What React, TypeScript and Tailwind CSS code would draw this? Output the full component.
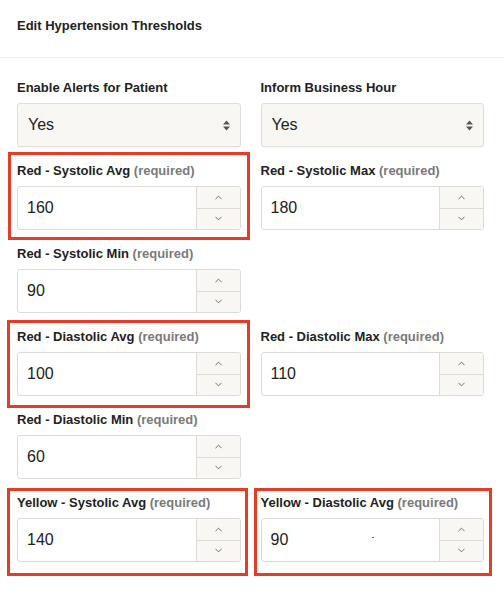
import { ChevronDown, ChevronUp } from "lucide-react";

type Field = {
  label: string;
  value: string;
  required?: boolean;
  // annotation box drawn around the field
  mark?: string;
  speck?: boolean;
};

const rows: [Field, Field | null][] = [
  [
    { label: "Red - Systolic Avg", value: "160", required: true, mark: "-top-[11px] -left-[9px] -right-[9px] -bottom-[10px]" },
    { label: "Red - Systolic Max", value: "180", required: true },
  ],
  [{ label: "Red - Systolic Min", value: "90", required: true }, null],
  [
    { label: "Red - Diastolic Avg", value: "100", required: true, mark: "-top-[9px] -left-[10px] -right-[9px] -bottom-[12px]" },
    { label: "Red - Diastolic Max", value: "110", required: true },
  ],
  [{ label: "Red - Diastolic Min", value: "60", required: true }, null],
  [
    { label: "Yellow - Systolic Avg", value: "140", required: true, mark: "-top-[7px] -left-[10px] -right-[7px] -bottom-[14px]" },
    { label: "Yellow - Diastolic Avg", value: "90", required: true, mark: "-top-[7px] -left-[7px] -right-[8px] -bottom-[14px]", speck: true },
  ],
];

function Label({ text, required }: { text: string; required?: boolean }) {
  return (
    <div className="h-4 text-[13px] leading-4 font-bold text-[#222] whitespace-nowrap">
      {text}
      {required && <span className="text-[#7a7a7a]"> (required)</span>}
    </div>
  );
}

function SelectBox({ label }: { label: string }) {
  return (
    <div>
      <Label text={label} />
      <div className="mt-[7px] h-[44px] flex items-center justify-between rounded-[3px] border border-[#e2dfda] bg-[#f8f7f3] pl-[10px] pr-[10px] shadow-[0_1px_1px_rgba(0,0,0,0.04)]">
        <span className="text-[16px] text-[#222]">Yes</span>
        <svg width="7" height="11" viewBox="0 0 7 11" className="text-[#555]">
          <path d="M3.5 0.5 L7 4.5 H0 Z" fill="currentColor" />
          <path d="M3.5 10.5 L7 6.5 H0 Z" fill="currentColor" />
        </svg>
      </div>
    </div>
  );
}

function NumberField({ field }: { field: Field }) {
  return (
    <div className="relative">
      {field.mark && (
        <span className={`pointer-events-none absolute ${field.mark} border-[3px] border-[#e63b25]`} />
      )}
      <Label text={field.label} required={field.required} />
      <div className="relative mt-[7px] h-[44px] flex rounded-[3px] border border-[#dedbd6] bg-white overflow-hidden">
        <div className="flex-1 flex items-center pl-[9px] text-[16px] text-[#222]">{field.value}</div>
        {field.speck && <span className="absolute left-[110px] top-[18px] h-[1px] w-[2px] bg-[#e63b25]" />}
        <div className="w-[44px] flex flex-col border-l border-[#dedbd6] bg-[#f8f7f3]">
          <div className="flex-1 flex items-center justify-center border-b border-[#dedbd6] text-[#666]">
            <ChevronUp size={11} strokeWidth={2} />
          </div>
          <div className="flex-1 flex items-center justify-center text-[#666]">
            <ChevronDown size={11} strokeWidth={2} />
          </div>
        </div>
      </div>
    </div>
  );
}

export default function App() {
  return (
    <div className="w-[504px] h-[596px] bg-white overflow-hidden font-['Liberation_Sans',Arial,sans-serif]">
      <div className="h-[58px] border-b border-[#ececec] pl-[17px] pt-[18px]">
        <h1 className="text-[13px] leading-4 font-bold text-[#222]">Edit Hypertension Thresholds</h1>
      </div>
      <div className="pl-[17px] pr-5 pt-[22px] flex flex-col gap-4">
        <div className="grid grid-cols-2 gap-x-5">
          <SelectBox label="Enable Alerts for Patient" />
          <SelectBox label="Inform Business Hour" />
        </div>
        {rows.map(([a, b], i) => (
          <div key={i} className="grid grid-cols-2 gap-x-5">
            <NumberField field={a} />
            {b ? <NumberField field={b} /> : <div />}
          </div>
        ))}
      </div>
    </div>
  );
}
